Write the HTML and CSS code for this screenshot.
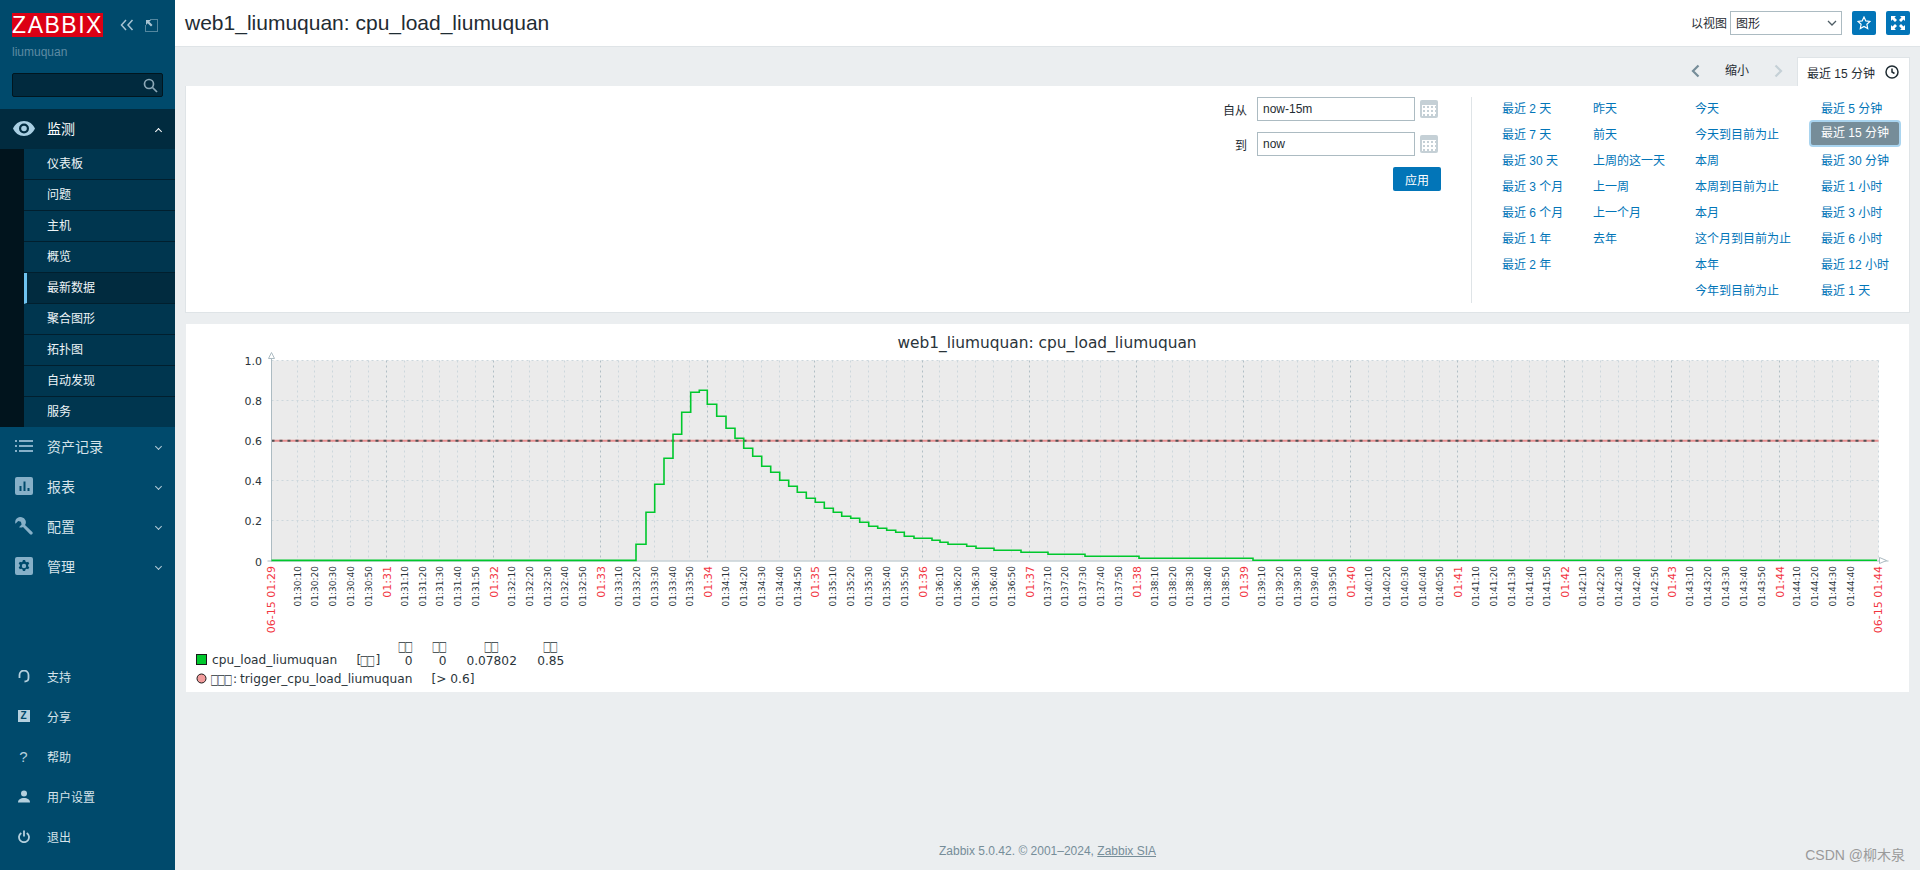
FILE: index.html
```html
<!DOCTYPE html>
<html lang="zh">
<head>
<meta charset="utf-8">
<title>web1_liumuquan: cpu_load_liumuquan</title>
<link rel="stylesheet" href="styles.css">
</head>
<body>
<div class="app">
  <aside class="sidebar">
    <div class="brand">
      <div class="brand-top">
        <div class="logo">ZABBIX</div>
        <svg class="tool-a" viewBox="0 0 14 12"><path d="M6 1 1.500 6 6 11M12.500 1 8 6l4.500 5" /></svg>
        <svg class="tool-b" viewBox="0 0 13 13"><path class="dots" d="M5.500 .5h7v12H.5V5.500" /><path class="solid" d="M1 1h5L4.300 2.700 7.500 6 6 7.500 2.700 4.300 1 6z" /></svg>
      </div>
      <div class="user">liumuquan</div>
      <div class="search">
        <svg viewBox="0 0 15 15"><circle cx="6" cy="6" r="4.500" /><path d="m9.500 9.500 4.500 4.500" /></svg>
      </div>
    </div>
    <nav class="menu">
      <a class="head open">
        <span class="ic"><svg class="eye" viewBox="0 0 22 15"><path d="M11 0C6 0 2 3 0 7.500 2 12 6 15 11 15s9-3 11-7.500C20 3 16 0 11 0zm0 2.500a5 5 0 1 1 0 10 5 5 0 0 1 0-10zm0 2.200a2.800 2.800 0 1 0 0 5.600 2.800 2.800 0 0 0 0-5.600z" /></svg></span>
        <span class="lbl">监测</span><i class="chev up"></i>
      </a>
      <div class="sub">
        <a>仪表板</a><a>问题</a><a>主机</a><a>概览</a><a class="cur">最新数据</a><a>聚合图形</a><a>拓扑图</a><a>自动发现</a><a>服务</a>
      </div>
      <a class="head">
        <span class="ic"><svg class="mi" viewBox="0 0 18 12"><path d="M0 0h2v2H0zM4 0h14v2H4zM0 5h2v2H0zM4 5h14v2H4zM0 10h2v2H0zM4 10h14v2H4z" /></svg></span>
        <span class="lbl">资产记录</span><i class="chev"></i>
      </a>
      <a class="head">
        <span class="ic"><svg class="mi" viewBox="0 0 18 18"><path fill-rule="evenodd" d="M2 0h14a2 2 0 0 1 2 2v14a2 2 0 0 1-2 2H2a2 2 0 0 1-2-2V2a2 2 0 0 1 2-2zm2.500 9v5h2V9zm4-4.500V14h2V4.500zm4 6.500v3h2v-3z" /></svg></span>
        <span class="lbl">报表</span><i class="chev"></i>
      </a>
      <a class="head">
        <span class="ic"><svg class="mi" viewBox="0 0 18 18"><path d="M6.800.3a5 5 0 0 0-6.300 6.400l2.700-2.600 2.700.7.700 2.700L4 10.200l.1.1A5 5 0 0 0 8 9.900l7 7.400c.6.600 1.500.6 2.100 0l.2-.2c.6-.6.600-1.500 0-2.100L10 8a5 5 0 0 0-3.200-7.700z" /></svg></span>
        <span class="lbl">配置</span><i class="chev"></i>
      </a>
      <a class="head">
        <span class="ic"><svg class="mi" viewBox="0 0 18 18"><path fill-rule="evenodd" d="M2 0h14a2 2 0 0 1 2 2v14a2 2 0 0 1-2 2H2a2 2 0 0 1-2-2V2a2 2 0 0 1 2-2zm5.900 3-.3 1.500-1.300.7-1.500-.5-1.100 2 1.200 1v1.600l-1.200 1 1.100 2 1.500-.5 1.300.7.300 1.500h2.200l.3-1.500 1.300-.7 1.500.5 1.100-2-1.200-1V7.700l1.200-1-1.100-2-1.500.5-1.300-.7L10.100 3zM9 6.800a2.200 2.200 0 1 1 0 4.400 2.200 2.200 0 0 1 0-4.400z" /></svg></span>
        <span class="lbl">管理</span><i class="chev"></i>
      </a>
    </nav>
    <nav class="bottom">
      <a><span class="ic"><svg class="bi line" viewBox="0 0 12 13"><path d="M1.500 8V5a4.500 4.500 0 0 1 9 0v3c0 2-1.500 3.500-4 3.500" /></svg></span>支持</a>
      <a><span class="ic"><span class="ztile">Z</span></span>分享</a>
      <a><span class="ic"><span class="qm">?</span></span>帮助</a>
      <a><span class="ic"><svg class="bi" viewBox="0 0 12 12"><circle cx="6" cy="3" r="3" /><path d="M0 12c0-3 2.500-4.500 6-4.500S12 9 12 12z" /></svg></span>用户设置</a>
      <a><span class="ic"><svg class="bi line" viewBox="0 0 12 12"><path d="M3.300 2.500a5 5 0 1 0 5.400 0M6 0v6" /></svg></span>退出</a>
    </nav>
  </aside>

  <main class="main">
    <header class="topbar">
      <h1>web1_liumuquan: cpu_load_liumuquan</h1>
      <div class="controls">
        <span class="view-label">以视图</span>
        <div class="select"><span>图形</span><svg viewBox="0 0 10 6"><path d="m1 1 4 4 4-4" /></svg></div>
        <button class="icon-btn star"><svg viewBox="0 0 14 14"><path d="m7 1 1.800 3.900 4.200.5-3.100 2.900.8 4.200L7 10.400l-3.700 2.100.8-4.200L1 5.400l4.200-.5z" /></svg></button>
        <button class="icon-btn full"><svg viewBox="0 0 14 14"><path d="M0 0h5L3.500 1.500 6 4 4 6 1.500 3.500 0 5zM14 0v5l-1.500-1.500L10 6 8 4l2.500-2.500L9 0zM0 14V9l1.500 1.500L4 8l2 2-2.500 2.500L5 14zM14 14H9l1.500-1.500L8 10l2-2 2.500 2.500L14 9z" /></svg></button>
      </div>
    </header>

    <div class="zoombar">
      <svg class="nav-arrow" viewBox="0 0 10 14"><path d="M8.500 1.500 3 7l5.500 5.500" /></svg>
      <span class="zoom-out">缩小</span>
      <svg class="nav-arrow off" viewBox="0 0 10 14"><path d="M1.500 1.500 7 7l-5.500 5.500" /></svg>
      <div class="tab">最近 15 分钟<svg viewBox="0 0 14 14"><circle cx="7" cy="7" r="6" /><path d="M7 3.500V7l2.500 1.500" /></svg></div>
    </div>

    <section class="filter">
      <form class="time-form">
        <div class="row"><label>自从</label><input type="text" value="now-15m"><span class="cal"><i></i></span></div>
        <div class="row"><label>到</label><input type="text" value="now"><span class="cal"><i></i></span></div>
        <button type="button" class="apply">应用</button>
      </form>
      <div class="quick">
        <a>最近 2 天</a><a>昨天</a><a>今天</a><a>最近 5 分钟</a>
        <a>最近 7 天</a><a>前天</a><a>今天到目前为止</a><a class="sel">最近 15 分钟</a>
        <a>最近 30 天</a><a>上周的这一天</a><a>本周</a><a>最近 30 分钟</a>
        <a>最近 3 个月</a><a>上一周</a><a>本周到目前为止</a><a>最近 1 小时</a>
        <a>最近 6 个月</a><a>上一个月</a><a>本月</a><a>最近 3 小时</a>
        <a>最近 1 年</a><a>去年</a><a>这个月到目前为止</a><a>最近 6 小时</a>
        <a>最近 2 年</a><span></span><a>本年</a><a>最近 12 小时</a>
        <span></span><span></span><a>今年到目前为止</a><a>最近 1 天</a>
      </div>
    </section>

    <section class="graph">
      <svg id="chart" viewBox="186 324 1723 368" width="1723" height="368"></svg>
    </section>

    <footer class="foot">Zabbix 5.0.42. © 2001–2024, <u>Zabbix SIA</u></footer>
  </main>
</div>
<div class="watermark">CSDN @柳木泉</div>
<script src="chart.js"></script>
</body>
</html>
```
FILE: styles.css
```css
* { box-sizing: border-box; }
html, body { margin: 0; height: 870px; overflow: hidden; }
body { font: 12px "Liberation Sans", "Noto Sans CJK SC", sans-serif; color: #1f2c33; background: #ebeef0; }
a { text-decoration: none; }
.app { display: flex; height: 870px; }

/* sidebar */
.sidebar { width: 175px; flex: none; background: #004a6c; display: flex; flex-direction: column; color: #d5e3ea; }
.brand { height: 109px; padding: 13px 12px 0; }
.brand-top { display: flex; align-items: flex-start; }
.logo { width: 91px; height: 24px; background: #dc0014; color: #fff; font-size: 23px; line-height: 24px; text-align: center; letter-spacing: 1.500px; }
.tool-a { width: 14px; height: 12px; margin: 6px 0 0 17px; fill: none; stroke: #a9c4d3; stroke-width: 1.500; }
.tool-b { width: 13px; height: 13px; margin: 6px 0 0 11px; fill: none; }
.tool-b .dots { stroke: #a9c4d3; stroke-dasharray: 1 1; }
.tool-b .solid { fill: #a9c4d3; }
.user { margin-top: 8px; color: #5d8aa3; font-size: 12px; line-height: 14px; }
.search { margin-top: 14px; width: 151px; height: 24px; background: #012a3e; border: 1px solid #01161f; border-radius: 2px; display: flex; justify-content: flex-end; align-items: center; padding-right: 4px; }
.search svg { width: 15px; height: 15px; fill: none; stroke: #8ba7b6; stroke-width: 1.700; }
.menu { display: flex; flex-direction: column; }
.head { height: 40px; display: flex; align-items: center; color: #d5e3ea; font-size: 14px; padding-bottom: 2px; }
.head.open { background: #012b3f; color: #fff; }
.ic { width: 47px; flex: none; display: flex; justify-content: center; }
.eye { width: 22px; height: 15px; fill: #a9cfe3; margin-left: 1px; }
.mi { width: 18px; fill: #86b0c8; margin-left: 1px; }
.chev { width: 5px; height: 5px; margin: 1px 14px 0 auto; border-right: 1px solid #b5cdd9; border-bottom: 1px solid #b5cdd9; transform: rotate(45deg); }
.chev.up { margin-top: 6px; border-color: #fff; transform: rotate(225deg); }
.sub { background: #01141d; padding-left: 24px; display: flex; flex-direction: column; }
.sub a { height: 31px; line-height: 30px; padding-left: 23px; color: #edf4f7; background: #00364f; border-bottom: 1px solid #011f2e; }
.sub a:last-child { border-bottom: 0; height: 30px; }
.sub a.cur { background: #012b3f; border-left: 3px solid #6ec3f0; padding-left: 20px; }
.bottom { margin-top: auto; padding-bottom: 14px; display: flex; flex-direction: column; }
.bottom a { height: 40px; display: flex; align-items: center; color: #d5e3ea; }
.bi { width: 12px; height: 13px; fill: #b4d0de; }
.bi.line { fill: none; stroke: #b4d0de; stroke-width: 1.800; }
.ztile { width: 12px; height: 12px; background: #b4d0de; color: #004a6c; font: bold 10px/12px "Liberation Sans", sans-serif; text-align: center; }
.qm { color: #b4d0de; font-size: 15px; line-height: 15px; }

/* main */
.main { flex: 1; min-width: 0; display: flex; flex-direction: column; }
.topbar { height: 47px; flex: none; background: #fff; border-bottom: 1px solid #dfe4e7; display: flex; align-items: center; justify-content: space-between; padding: 0 10px 1px 10px; }
h1 { margin: 0; font-size: 21px; font-weight: 400; color: #1f2c33; }
.controls { display: flex; align-items: center; }
.view-label { margin-right: 3px; }
.select { width: 112px; height: 24px; border: 1px solid #acbbc2; display: flex; align-items: center; justify-content: space-between; padding: 0 4px 0 5px; margin-right: 10px; }
.select svg { width: 10px; height: 6px; fill: none; stroke: #4d5c64; stroke-width: 1.300; }
.icon-btn { width: 24px; height: 24px; padding: 0; border: 0; border-radius: 2px; background: #0275b8; display: flex; align-items: center; justify-content: center; }
.icon-btn + .icon-btn { margin-left: 10px; }
.icon-btn svg { width: 14px; height: 14px; }
.star svg { fill: none; stroke: #fff; stroke-width: 1.200; }
.full svg { fill: #fff; }
.zoombar { height: 39px; flex: none; display: flex; justify-content: flex-end; align-items: flex-end; padding-right: 10px; }
.nav-arrow { width: 10px; height: 14px; margin-bottom: 8px; fill: none; stroke: #768d99; stroke-width: 2.200; }
.nav-arrow.off { stroke: #c5d0d6; margin-right: 13px; }
.zoom-out { margin: 0 25px 7px; line-height: 16px; }
.tab { width: 113px; height: 29px; background: #fff; border: 1px solid #dfe4e7; border-bottom: 0; display: flex; align-items: center; justify-content: space-between; padding: 0 10px 0 9px; }
.tab svg { width: 14px; height: 14px; fill: none; stroke: #1f2c33; stroke-width: 1.500; }

.filter { margin: 0 10px; height: 227px; flex: none; background: #fff; border: 1px solid #dfe4e7; border-top: 0; display: flex; padding-top: 11px; }
.time-form { flex: 1; display: flex; flex-direction: column; align-items: flex-end; padding-right: 30px; }
.row { display: flex; align-items: center; height: 24px; margin-bottom: 11px; }
.row label { width: 30px; text-align: right; margin-right: 10px; }
.row input { width: 158px; height: 24px; border: 1px solid #acbbc2; padding: 0 5px; font: inherit; color: #1f2c33; margin-right: 5px; }
.cal { width: 18px; height: 18px; background: #c5d0d6; border-radius: 2px; margin-right: 3px; padding: 5px 2px 2px; display: block; }
.cal i { display: block; height: 11px; background-color: #fff; background-image: radial-gradient(#c5d0d6 1px, transparent 1.200px); background-size: 4px 4px; }
.apply { width: 48px; height: 24px; border: 0; border-radius: 2px; background: #0275b8; color: #fff; font: inherit; padding: 0; }
.quick { width: 438px; height: 206px; flex: none; border-left: 1px solid #dfe4e7; padding-left: 30px; display: grid; grid-template-columns: 91px 102px 126px 1fr; grid-auto-rows: 26px; align-items: center; align-content: start; }
.quick a { color: #0275b8; margin-top: -5px; white-space: nowrap; }
.quick a.sel { justify-self: start; margin-left: -10px; padding: 4px 10px; line-height: 15px; background: #768d99; color: #fff; border-radius: 2px; box-shadow: 0 0 0 2px #a9d4ef; }

.graph { margin: 11px 11px 0; height: 368px; flex: none; background: #fff; }
#chart { display: block; font-family: "DejaVu Sans", sans-serif; }
.foot { margin-top: auto; height: 26px; text-align: center; color: #768d99; font-size: 12px; line-height: 14px; }
.watermark { position: absolute; right: 15px; top: 846px; color: #9a9a9a; font-size: 14px; line-height: 18px; }

/* chart parts */
.plot { fill: #ebebeb; }
.g-minor { stroke: #ccd7dc; stroke-dasharray: 2 3; fill: none; }
.g-major { stroke: #b0bec5; stroke-dasharray: 2 3; fill: none; }
.axis { stroke: #acbbc2; stroke-width: 1; fill: none; }
.arrow { fill: #fff; stroke: #acbbc2; }
.trig-a { stroke: #e88f90; stroke-width: 2; }
.trig-b { stroke: #4f5355; stroke-width: 2; stroke-dasharray: 3 5; }
.series { stroke: #00c82d; stroke-width: 1.600; fill: none; }
.t { fill: #2a343a; }
.t-title { font-size: 15.400px; text-anchor: middle; }
.t-y { font-size: 11px; text-anchor: end; }
.t-x { font-size: 9px; text-anchor: end; fill: #2a343a; }
.t-red { font-size: 11px; text-anchor: end; fill: #f2353f; }
.t-leg { font-size: 12.200px; }
.t-mid { font-size: 12.200px; text-anchor: middle; }
.t-box { font-size: 8.500px; letter-spacing: -1.200px; }
.key { fill: #00c82d; stroke: #1a1a1a; }
.dot { fill: #f29c9c; stroke: #1a1a1a; }
```
FILE: chart.js
```js
(function () {
  var svg = document.getElementById('chart');
  var NS = 'http://www.w3.org/2000/svg';
  var L = 271.5, R = 1878.5, T = 360.5, B = 560.5;
  var X0 = 707.3, PX = 107.13 / 60;

  function el(name, attrs, text) {
    var n = document.createElementNS(NS, name);
    for (var k in attrs) n.setAttribute(k, attrs[k]);
    if (text != null) n.textContent = text;
    svg.appendChild(n);
    return n;
  }
  function line(x1, y1, x2, y2, c) { el('line', { x1: x1, y1: y1, x2: x2, y2: y2, 'class': c }); }
  function pad(n) { return (n < 10 ? '0' : '') + n; }
  function rot(x, y, c, s) { el('text', { x: x, y: y, 'class': c, transform: 'rotate(-90 ' + x + ' ' + y + ')' }, s); }
  // tall, narrow empty boxes: what the original image draws for words its font lacks
  function boxes(x, y, s) { el('text', { 'class': 't t-box', transform: 'translate(' + x + ' ' + y + ') scale(1 1.65)' }, s); }

  el('rect', { x: L, y: T, width: R - L, height: B - T, 'class': 'plot' });
  el('text', { x: 1047, y: 348, 'class': 't t-title' }, 'web1_liumuquan: cpu_load_liumuquan');

  [1, .8, .6, .4, .2, 0].forEach(function (v, i) {
    var y = Math.round(B - v * 200) - .5 + (i === 5 ? 1 : 0);
    if (i < 5) line(L, y, R, y, 'g-minor');
    el('text', { x: 262, y: y + 4, 'class': 't t-y' }, v === 0 ? '0' : v.toFixed(1));
  });

  // one tick every 10 seconds, from 01:30:10 to 01:44:40
  for (var s = 90 * 60 + 10; s <= 104 * 60 + 40; s += 10) {
    var x = Math.round(X0 + (s - 94 * 60) * PX) + .5;
    var m = Math.floor(s / 60), sec = s % 60;
    line(x, T, x, B, sec === 0 ? 'g-major' : 'g-minor');
    if (sec === 0) rot(x + 4, 566, 't-red', '01:' + pad(m - 60));
    else rot(x + 3, 566, 't-x', '01:' + pad(m - 60) + ':' + pad(sec));
  }
  line(R, T, R, B, 'g-minor');

  rot(275, 566, 't-red', '06-15 01:29');
  rot(1881.5, 566, 't-red', '06-15 01:44');

  line(L, 440.7, R, 440.7, 'trig-a');
  line(L, 440.7, R, 440.7, 'trig-b');

  line(L - 4, B + .5, R + 10, B + .5, 'axis');
  line(L, T - 6, L, B + 1, 'axis');

  // the measured steps: [x where the step ends, y of the step]
  var steps = [[636, 560.4], [646, 544.3], [654.7, 512.3], [664, 484.3], [673, 458.3], [681.7, 434.3], [690.7, 412.3], [699.3, 392.3],
    [707.3, 390.3], [716.7, 404.3], [726, 416.3], [735, 428.3], [743.7, 438.3], [752.7, 448.3], [761.7, 456.3], [770.7, 466.3], [779.7, 472.3],
    [788.7, 480.3], [797.3, 486.3], [806.3, 492.3], [815.3, 498.3], [824.3, 502.3], [833.3, 508.3], [841.7, 512.3], [850.7, 516.3], [859.7, 518.3],
    [868.7, 522.3], [877.7, 526.3], [886.7, 528.3], [895.7, 530.3], [904.3, 532.3], [914, 536.3], [932, 538.3],
    [940, 540.3], [948, 542.3], [966.7, 544.3], [976, 546.3], [994, 548.3], [1021, 550.3], [1048, 552.3], [1085, 554.3], [1139, 556.3], [1253, 558.3], [1877, 560.3]];
  var d = 'M' + (L + .5) + ' ' + steps[0][1], lastX = L;
  steps.forEach(function (p) {
    d += 'L' + lastX + ' ' + p[1] + 'L' + p[0] + ' ' + p[1];
    lastX = p[0];
  });
  el('path', { d: d, 'class': 'series' });

  el('path', { d: 'M268.500 358.500 271.500 352.500 274.500 358.500z', 'class': 'arrow' });
  el('path', { d: 'M1879.500 557.500 1886.500 560.500 1879.500 563.500z', 'class': 'arrow' });

  // legend
  el('rect', { x: 196.5, y: 654.5, width: 10, height: 10, 'class': 'key' });
  el('text', { x: 212, y: 664, 'class': 't t-leg' }, 'cpu_load_liumuquan');
  el('text', { x: 356.5, y: 664, 'class': 't t-leg' }, '[');
  boxes(360, 665, '□□');
  el('text', { x: 375.5, y: 664, 'class': 't t-leg' }, ']');
  [[408.7, 398, '0'], [442.7, 432, '0'], [491.7, 484, '0.07802'], [550.7, 543, '0.85']].forEach(function (c) {
    boxes(c[1], 651, '□□');
    el('text', { x: c[0], y: 664.5, 'class': 't t-mid' }, c[2]);
  });
  el('circle', { cx: 201.5, cy: 678.5, r: 4.5, 'class': 'dot' });
  boxes(210.5, 684, '□□□');
  el('text', { x: 233, y: 683, 'class': 't t-leg' }, ':');
  el('text', { x: 240, y: 683, 'class': 't t-leg' }, 'trigger_cpu_load_liumuquan');
  el('text', { x: 431.5, y: 683, 'class': 't t-leg' }, '[> 0.6]');
})();
```
